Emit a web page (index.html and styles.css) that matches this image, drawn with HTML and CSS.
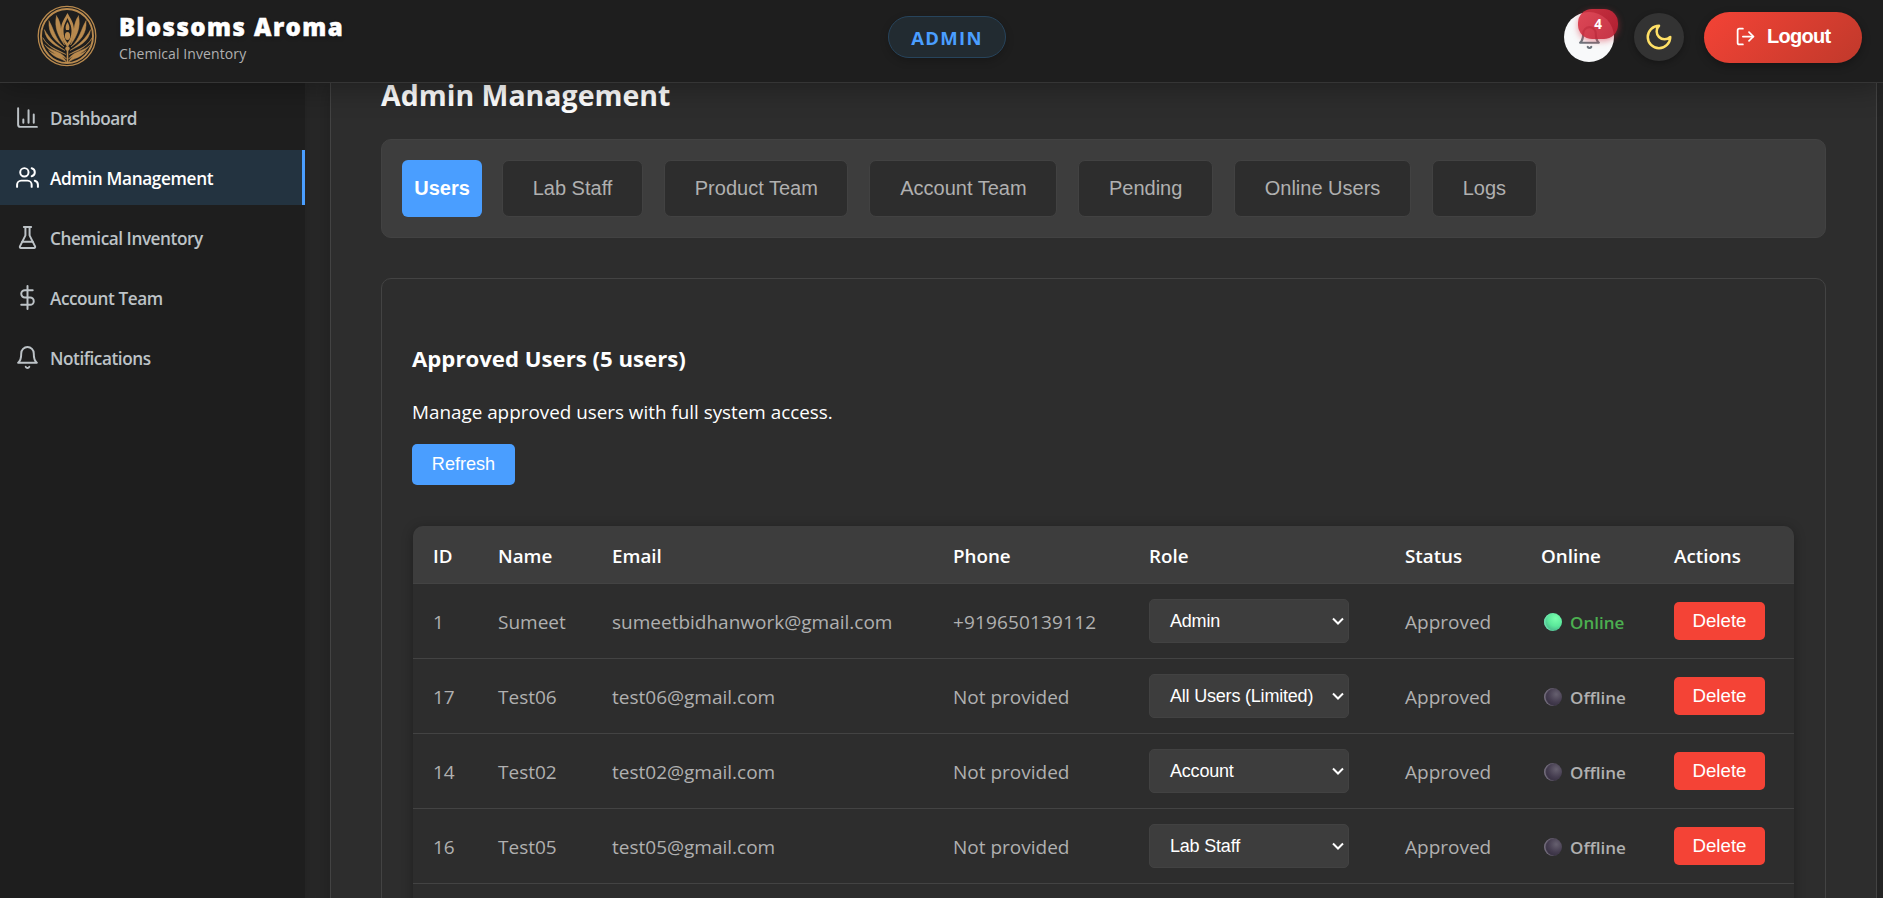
FILE: index.html
```html
<!DOCTYPE html>
<html lang="en">
<head>
<meta charset="utf-8">
<title>Blossoms Aroma - Admin Management</title>
<link rel="stylesheet" href="styles.css">
</head>
<body>
<header class="topbar">
  <div class="brand">
    <svg class="logo" viewBox="0 0 60 62" fill="none" stroke="#b98a4e" stroke-linecap="round">
      <ellipse cx="30" cy="31" rx="28.8" ry="29.6" stroke-width="1.3"/>
      <ellipse cx="30" cy="31" rx="26" ry="27" stroke-width="1.9"/>
      <g fill="#b98a4e" stroke="none">
        <path fill-rule="evenodd" d="M30.500 8C33 13 37 17 37 25C37 33 34 38 30.500 42C27 38 24 33 24 25C24 17 28 13 30.500 8ZM30.500 13C28.500 18 26.500 20 26.500 26C26.500 31 28 35 30.500 38C33 35 34.500 31 34.500 26C34.500 20 32.500 18 30.500 13Z"/>
        <path d="M30.500 17C32 20 33 22 32 25H29C28 22 29 20 30.500 17Z"/>
        <ellipse cx="30.500" cy="31" rx="2.600" ry="4"/>
        <circle cx="30.500" cy="43.500" r="2.200"/>
        <path id="petals" d="M19.500 11C17 22 21 31 27.500 40C23.500 29 25 18 19.500 11ZM12 16C11 29 18 36 27 42C18 34 17 24 12 16ZM7.500 25C9 37 19 41 28 45.500C18 39 13 34 7.500 25ZM6 33C10 42 20 44 29 49.500C20 46 12 43 6 33ZM8 40C13 46 23 45 29.500 54C22 49 14 49 8 40ZM12 46C17 50 25 48 29.500 57C24 53 17 53 12 46Z" stroke="#b98a4e" stroke-width=".5"/>
        <use href="#petals" transform="translate(61 0) scale(-1 1)"/>
      </g>
      <path d="M30.500 43V57" stroke-width="1.600"/>
    </svg>
    <div class="brand-text">
      <div class="brand-name">Blossoms Aroma</div>
      <div class="brand-sub">Chemical Inventory</div>
    </div>
  </div>
  <span class="role-pill">ADMIN</span>
  <div class="tools">
    <button class="bell-btn" aria-label="Notifications">
      <svg class="icon bell-icon" viewBox="0 0 24 24"><path d="M6 8a6 6 0 0 1 12 0c0 7 3 9 3 9H3s3-2 3-9"/><path d="M10.300 21a1.940 1.940 0 0 0 3.400 0"/></svg>
      <span class="badge">4</span>
    </button>
    <button class="moon-btn" aria-label="Theme">
      <svg class="icon moon-icon" viewBox="0 0 24 24"><path d="M12 3a6 6 0 0 0 9 9 9 9 0 1 1-9-9Z"/></svg>
    </button>
    <button class="logout">
      <svg class="icon out-icon" viewBox="0 0 24 24"><path d="M9 21H5a2 2 0 0 1-2-2V5a2 2 0 0 1 2-2h4"/><path d="m16 17 5-5-5-5"/><path d="M21 12H9"/></svg>
      <span>Logout</span>
    </button>
  </div>
</header>
<div class="layout">
  <nav class="sidebar">
    <a class="nav-item"><svg class="icon nav-icon" viewBox="0 0 24 24"><path d="M3 3v16a2 2 0 0 0 2 2h16"/><path d="M18 17V9M13 17V5M8 17v-3"/></svg><span>Dashboard</span></a>
    <a class="nav-item active"><svg class="icon nav-icon" viewBox="0 0 24 24"><path d="M16 21v-2a4 4 0 0 0-4-4H6a4 4 0 0 0-4 4v2"/><circle cx="9" cy="7" r="4"/><path d="M22 21v-2a4 4 0 0 0-3-3.870"/><path d="M16 3.130a4 4 0 0 1 0 7.750"/></svg><span>Admin Management</span></a>
    <a class="nav-item"><svg class="icon nav-icon" viewBox="0 0 24 24"><path d="M10 2v7.530a2 2 0 0 1-.210.900L4.720 20.550a1 1 0 0 0 .900 1.450h12.760a1 1 0 0 0 .900-1.450l-5.070-10.120a2 2 0 0 1-.210-.900V2"/><path d="M8.500 2h7M7 16h10"/></svg><span>Chemical Inventory</span></a>
    <a class="nav-item"><svg class="icon nav-icon" viewBox="0 0 24 24"><path d="M12 1v22"/><path d="M17 5H9.500a3.500 3.500 0 0 0 0 7h5a3.500 3.500 0 0 1 0 7H6"/></svg><span>Account Team</span></a>
    <a class="nav-item"><svg class="icon nav-icon" viewBox="0 0 24 24"><path d="M6 8a6 6 0 0 1 12 0c0 7 3 9 3 9H3s3-2 3-9"/><path d="M10.300 21a1.940 1.940 0 0 0 3.400 0"/></svg><span>Notifications</span></a>
  </nav>
  <main class="main">
    <h1 class="page-title">Admin Management</h1>
    <div class="tabs">
      <button class="tab tab-active">Users</button>
      <button class="tab">Lab Staff</button>
      <button class="tab">Product Team</button>
      <button class="tab">Account Team</button>
      <button class="tab">Pending</button>
      <button class="tab">Online Users</button>
      <button class="tab">Logs</button>
    </div>
    <section class="card">
      <h2 class="card-title">Approved Users (5 users)</h2>
      <p class="card-text">Manage approved users with full system access.</p>
      <button class="refresh">Refresh</button>
      <table class="users">
        <colgroup><col class="c-id"><col class="c-name"><col class="c-email"><col class="c-phone"><col class="c-role"><col class="c-status"><col class="c-online"><col class="c-actions"></colgroup>
        <thead>
          <tr><th>ID</th><th>Name</th><th>Email</th><th>Phone</th><th>Role</th><th>Status</th><th>Online</th><th>Actions</th></tr>
        </thead>
        <tbody>
          <tr><td>1</td><td>Sumeet</td><td>sumeetbidhanwork@gmail.com</td><td class="tel">+919650139112</td><td><div class="select"><span>Admin</span><svg class="chev" viewBox="0 0 12 8"><path d="M1 1.500l5 5 5-5"/></svg></div></td><td>Approved</td><td><div class="presence on"><i class="dot"></i>Online</div></td><td><button class="delete">Delete</button></td></tr>
          <tr><td>17</td><td>Test06</td><td>test06@gmail.com</td><td>Not provided</td><td><div class="select"><span>All Users (Limited)</span><svg class="chev" viewBox="0 0 12 8"><path d="M1 1.500l5 5 5-5"/></svg></div></td><td>Approved</td><td><div class="presence"><i class="dot"></i>Offline</div></td><td><button class="delete">Delete</button></td></tr>
          <tr><td>14</td><td>Test02</td><td>test02@gmail.com</td><td>Not provided</td><td><div class="select"><span>Account</span><svg class="chev" viewBox="0 0 12 8"><path d="M1 1.500l5 5 5-5"/></svg></div></td><td>Approved</td><td><div class="presence"><i class="dot"></i>Offline</div></td><td><button class="delete">Delete</button></td></tr>
          <tr><td>16</td><td>Test05</td><td>test05@gmail.com</td><td>Not provided</td><td><div class="select"><span>Lab Staff</span><svg class="chev" viewBox="0 0 12 8"><path d="M1 1.500l5 5 5-5"/></svg></div></td><td>Approved</td><td><div class="presence"><i class="dot"></i>Offline</div></td><td><button class="delete">Delete</button></td></tr>
          <tr><td></td><td></td><td></td><td></td><td></td><td></td><td></td><td></td></tr>
        </tbody>
      </table>
    </section>
  </main>
</div>
</body>
</html>
```

FILE: styles.css
```css
* { box-sizing: border-box; }
html { overflow: hidden; }
body {
  margin: 0;
  height: 898px;
  overflow: hidden;
  display: flex;
  flex-direction: column;
  background: #282828;
  color: #fff;
  font-family: "Segoe UI", "Open Sans", "Noto Sans", sans-serif;
  font-size: 18.8px;
}
button {
  font-family: Arial, "Liberation Sans", sans-serif;
  border: 0;
  margin: 0;
  padding: 0;
  color: #fff;
}
.icon {
  fill: none;
  stroke: currentColor;
  stroke-width: 2;
  stroke-linecap: round;
  stroke-linejoin: round;
}

/* Header */
.topbar {
  position: relative;
  z-index: 2;
  flex: none;
  height: 83px;
  display: grid;
  grid-template-columns: 1fr auto 1fr;
  align-items: start;
  padding: 0 25px 0 36px;
  background: #1e1e1e;
  border-bottom: 1px solid #353535;
  box-shadow: 0 4px 30px rgba(0, 0, 0, .32);
}
.brand { display: flex; }
.logo { width: 60px; height: 62px; margin: 5px 0 0 1px; }
.brand-text { padding: 11px 0 0 22px; }
.brand-name {
  font-size: 24px;
  line-height: 32px;
  font-weight: 800;
  letter-spacing: 1.45px;
  -webkit-text-stroke: .5px #fff;
  text-shadow: 0 2px 4px rgba(0, 0, 0, .3);
}
.brand-sub { font-size: 14px; line-height: 20px; letter-spacing: .1px; color: #b0b0b0; margin-top: 1px; }
.role-pill {
  width: 118px;
  height: 42px;
  margin-top: 16px;
  display: flex;
  align-items: center;
  justify-content: center;
  padding-top: 1px;
  border: 1px solid #27445c;
  border-radius: 21px;
  background: #222b31;
  color: #4a9eff;
  font-size: 18.5px;
  font-weight: 700;
  letter-spacing: 1.3px;
  box-shadow: 0 3px 8px rgba(0, 0, 0, .2);
}
.tools { display: flex; justify-content: flex-end; gap: 20px; padding-top: 12px; margin-right: -4px; }
.bell-btn, .moon-btn {
  position: relative;
  width: 50px;
  height: 50px;
  border-radius: 50%;
  display: flex;
  align-items: center;
  justify-content: center;
}
.bell-btn { background: #f8f9fa; color: #6c757d; }
.moon-btn { background: #333; color: #ffe066; margin-top: 1px; height: 48px; box-shadow: 0 2px 6px rgba(0, 0, 0, .3); }
.bell-icon { width: 25px; height: 25px; }
.moon-icon { width: 30px; height: 30px; }
.badge {
  position: absolute;
  left: 14px;
  top: -3px;
  width: 40px;
  height: 30px;
  display: flex;
  align-items: center;
  justify-content: center;
  border-radius: 14px;
  background: linear-gradient(135deg, rgba(220, 53, 69, .9), rgba(190, 30, 50, .9));
  color: #fff;
  font: 700 13.5px "Segoe UI", "Open Sans", sans-serif;
  box-shadow: 0 2px 6px rgba(220, 53, 69, .5);
}
.logout {
  width: 158px;
  height: 51px;
  border-radius: 26px;
  display: flex;
  align-items: center;
  padding: 0 0 2px 31px;
  gap: 11px;
  background: linear-gradient(135deg, #f44336, #c0392b);
  font-size: 20px;
  letter-spacing: -.7px;
  font-weight: 700;
  box-shadow: 0 3px 8px rgba(0, 0, 0, .3);
}
.out-icon { width: 21px; height: 21px; }

/* Layout */
.layout { flex: 1; min-height: 0; display: flex; overflow: hidden; }
.sidebar {
  width: 305px;
  flex: none;
  padding-top: 7px;
  display: flex;
  flex-direction: column;
  gap: 5px;
  background: #1e1e1e;
  box-shadow: 2px 0 10px rgba(0, 0, 0, .1);
}
.nav-item {
  height: 55px;
  display: flex;
  align-items: center;
  gap: 11px;
  padding-left: 15px;
  color: #bdc3c7;
  font-size: 17.2px;
  font-weight: 600;
  letter-spacing: -.45px;
}
.nav-item span { padding-top: 1px; }
.nav-icon { width: 25px; height: 25px; margin: 0 -1px 0 0; stroke-width: 1.900; }
.nav-item.active { color: #fff; background: #233340; border-right: 3px solid #4a9eff; }
.nav-item.active span { letter-spacing: -.35px; }

.main {
  width: 1547px;
  height: 1200px;
  margin-left: 25px;
  flex: none;
  padding: 0 50px;
  background: #2d2d2d;
  border: solid #434343;
  border-width: 0 1px;
  box-shadow: 0 0 22px rgba(0, 0, 0, .25);
}
.page-title { margin: 0; font-size: 28.500px; line-height: 24px; font-weight: 700; color: #fff; }
.tabs {
  height: 99px;
  margin-top: 32px;
  display: flex;
  align-items: center;
  gap: 21px;
  padding: 0 20px;
  background: #3d3d3d;
  border: 1px solid #424242;
  border-radius: 10px;
}
.tab {
  height: 57px;
  padding: 0 29.700px;
  font-size: 20px;
  color: #b0b0b0;
  background: #2d2d2d;
  border: 1px solid #424242;
  border-radius: 7px;
}
.tab-active { width: 80px; margin-right: -1px; padding: 0; color: #fff; background: #4a9eff; border: 0; border-radius: 6px; font-weight: 700; }
.card {
  height: 900px;
  margin-top: 40px;
  padding: 65px 30px 0;
  border: 1px solid #434343;
  border-radius: 10px;
}
.card-title { margin: 0; font-size: 22.200px; line-height: 30px; font-weight: 700; }
.card-text { margin: 23px 0 17px; line-height: 30px; font-size: 18.850px; }
.refresh { display: block; width: 103px; height: 41px; padding-bottom: 1px; border-radius: 5px; background: #4a9eff; font-size: 18.100px; }
.users {
  width: 1381px;
  margin: 41px 0 0 1px;
  table-layout: fixed;
  border-collapse: separate;
  border-spacing: 0;
  border-radius: 10px;
  overflow: hidden;
  box-shadow: 0 2px 12px rgba(0, 0, 0, .3);
}
.c-id { width: 65px; }
.c-name { width: 114px; }
.c-email { width: 341px; }
.c-phone { width: 196px; }
.c-role { width: 256px; }
.c-status { width: 136px; }
.c-online { width: 133px; }
.c-actions { width: 140px; }
.users th {
  height: 58px;
  padding: 3px 0 0 20px;
  text-align: left;
  font-weight: 600;
  background: #3d3d3d;
  border-bottom: 1px solid #434343;
}
.users td {
  height: 75px;
  padding: 2px 0 0 20px;
  color: #b0b0b0;
  font-size: 19px;
  white-space: nowrap;
  border-bottom: 1px solid #434343;
}
.users .tel { letter-spacing: .15px; }
.select {
  width: 200px;
  height: 44px;
  margin-top: -2px;
  display: flex;
  align-items: center;
  justify-content: space-between;
  padding: 0 4px 0 20px;
  background: #3d3d3d;
  border: 1px solid #424242;
  border-radius: 5px;
  color: #fff;
  font: 18px Arial, "Liberation Sans", sans-serif;
  letter-spacing: -.2px;
}
.chev { width: 12px; height: 8px; fill: none; stroke: #fff; stroke-width: 2; }
.presence { display: flex; align-items: center; gap: 8px; padding: 0 0 0 3px; font-size: 17px; font-weight: 600; }
.presence.on { color: #4caf50; }
.dot {
  width: 18px;
  height: 18px;
  border-radius: 50%;
  background: radial-gradient(circle at 68% 35%, #66606f 0, #463e51 45%, #352e40 75%);
  box-shadow: inset 1.500px 0 1px #77717f;
}
.on .dot {
  background: radial-gradient(circle at 65% 30%, #7affae 0, #5be89b 45%, #45a586 85%);
  box-shadow: inset 1.500px 0 1px #6fe0ae;
}
.delete { display: block; width: 91px; height: 38px; margin-top: -2px; padding-bottom: 1px; border-radius: 5px; background: #f44336; font-size: 18.700px; }
```
